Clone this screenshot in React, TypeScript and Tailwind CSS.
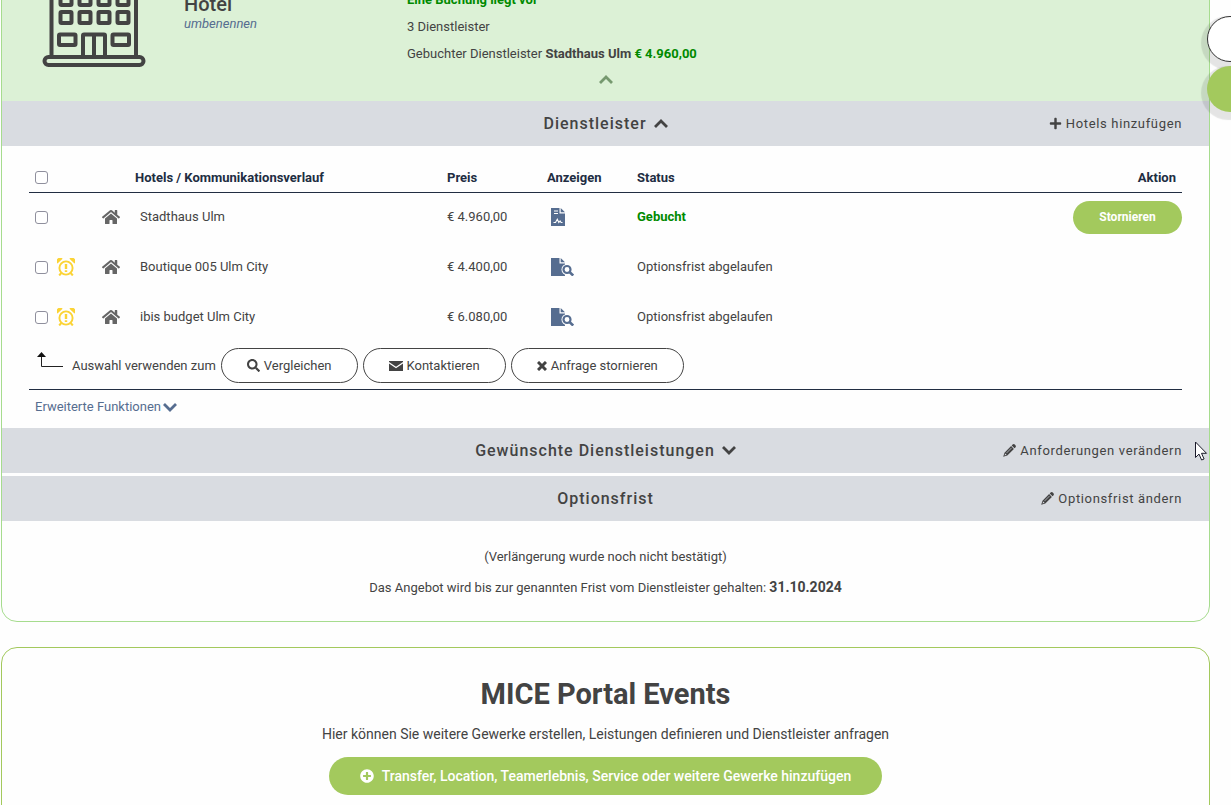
import type { ReactNode } from 'react'
import { FaHome, FaPlus, FaPlusCircle, FaSearch } from 'react-icons/fa'

const HOTELS = [
  { name: 'Stadthaus Ulm', price: '€ 4.960,00', status: 'Gebucht', booked: true },
  { name: 'Boutique 005 Ulm City', price: '€ 4.400,00', status: 'Optionsfrist abgelaufen', booked: false },
  { name: 'ibis budget Ulm City', price: '€ 6.080,00', status: 'Optionsfrist abgelaufen', booked: false },
]

function HotelIcon() {
  return (
    <svg width="104" height="100" viewBox="0 0 104 100" fill="none" stroke="#434343" strokeWidth="4">
      <path d="M9.5 90V2H94v88" />
      {[15, 33, 51].map(y =>
        [24, 43, 62, 81].map(x => (
          <rect key={`${x}-${y}`} x={x - 5.5} y={y - 6} width="11" height="11" rx="1" />
        )),
      )}
      <rect x="17" y="67.5" width="16.5" height="10.5" rx="1" />
      <rect x="70.5" y="67.5" width="16.5" height="10.5" rx="1" />
      <path d="M41 90V68.5a1 1 0 0 1 1-1h20a1 1 0 0 1 1 1V90M52 68v22" />
      <rect x="2.5" y="90" width="99" height="8" rx="4" />
    </svg>
  )
}

function Chevron({ up = false }: { up?: boolean }) {
  return (
    <svg width="14" height="9" viewBox="0 0 14 9" fill="none" stroke="currentColor" strokeWidth="2.8">
      <path d={up ? 'M1 8l6-6 6 6' : 'M1 1l6 6 6-6'} />
    </svg>
  )
}

function PencilIcon() {
  return (
    <svg width="13" height="13" viewBox="0 0 13 13" fill="#434343">
      <path d="M9.600.6a1.600 1.600 0 0 1 2.200 0l.6.6a1.600 1.600 0 0 1 0 2.200l-.9.9-2.800-2.800Z" />
      <path d="m8.100 2.100 2.800 2.800-6.600 6.600L.2 12.800l1.300-4.100ZM2.200 9.400l-.7 2.100 2.100-.7Z" />
      <path d="m8.200 3.700.6.6-5 5-.6-.6Z" fill="#9a9da2" />
    </svg>
  )
}

function CrossIcon() {
  return (
    <svg width="10" height="10" viewBox="0 0 10 10" stroke="#434343" strokeWidth="3">
      <path d="m1 1 8 8M9 1 1 9" />
    </svg>
  )
}

function AlarmIcon() {
  return (
    <svg width="18" height="18" viewBox="0 0 18 18" fill="none" stroke="#fbd335">
      <circle cx="9" cy="10" r="6.600" strokeWidth="1.900" />
      <path d="M.5 5.500A3.200 3.200 0 0 1 5.600.8ZM17.500 5.500a3.200 3.200 0 0 0-5.100-4.700Z" fill="#fbd335" stroke="none" />
      <path d="M4.300 15 2.200 17.500M13.700 15l2.100 2.500" strokeWidth="2" />
      <path d="M9 6v5M9 12.300v1.700" strokeWidth="2.400" />
    </svg>
  )
}

function ContractIcon() {
  return (
    <svg width="14" height="18" viewBox="0 0 14 18">
      <path d="M0 0h8.500v5.500H14V18H0ZM9.700 0 14 4.300H9.700Z" fill="#566d90" />
      <path d="M3 3h4M3 5.500h4M2.500 14.500h2l1.800-3.200 1.500 3.200 1.300-1.500 1 1.500h1.400" fill="none" stroke="#fff" strokeWidth="1.100" />
    </svg>
  )
}

function OfferIcon() {
  return (
    <svg width="23" height="18" viewBox="0 0 23 18">
      <path d="M0 0h8.500v5.500H14V18H0ZM9.700 0 14 4.300H9.700Z" fill="#566d90" />
      <circle cx="16" cy="11.500" r="5.500" fill="#fff" />
      <circle cx="16" cy="11.500" r="3.500" fill="#fff" stroke="#566d90" strokeWidth="2.200" />
      <path d="m18.500 14 3.700 3.500" stroke="#566d90" strokeWidth="2.600" />
    </svg>
  )
}

function MailIcon() {
  return (
    <svg width="14" height="10" viewBox="0 0 14 10" fill="#434343">
      <path d="M0 0h14v1L7 5.800 0 1ZM0 2.500l7 4.800 7-4.800V10H0Z" />
    </svg>
  )
}

function SelectionArrow() {
  return (
    <svg width="26" height="16" viewBox="0 0 26 16">
      <path d="M4.500 4v10.500H26" fill="none" stroke="#222" />
      <path d="M4.500 0 9 5H0Z" fill="#111" />
    </svg>
  )
}

function SectionBar({ title, children }: { title: ReactNode; children: ReactNode }) {
  return (
    <div className="grid h-[45px] grid-cols-[1fr_auto_1fr] items-center bg-[#d9dce1] px-[27px]">
      <h2 className="col-start-2 flex items-center gap-[7px] text-base font-medium tracking-[1px]">{title}</h2>
      <button type="button" className="flex items-center gap-1 justify-self-end text-[13px] tracking-wider">
        {children}
      </button>
    </div>
  )
}

function Checkbox({ label }: { label: string }) {
  return (
    <input
      type="checkbox"
      aria-label={label}
      className="h-[13px] w-[13px] shrink-0 appearance-none rounded-[3px] border border-[#8f8f9d] bg-white"
    />
  )
}

function OutlineButton({ children }: { children: ReactNode }) {
  return (
    <button
      type="button"
      className="flex h-[35px] items-center gap-1 rounded-full border border-[#434343] bg-white px-[25px]"
    >
      {children}
    </button>
  )
}

export default function App() {
  return (
    <div className="relative h-screen overflow-hidden bg-[#fefefe] font-[Roboto,sans-serif] text-[13px] leading-5 text-[#434343]">
      <main className="-mt-10 mr-[21px] ml-px">
        {/* Hotel */}
        <section className="overflow-hidden rounded-b-2xl border border-[#a6dc8e]">
          <div className="bg-[#dcf1d6] pb-[10px]">
            <div className="grid grid-cols-[142px_223px_1fr] pl-10">
              <div className="pt-[6px]">
                <HotelIcon />
              </div>
              <div className="pt-[31px]">
                <h1 className="text-xl leading-6 font-medium">Hotel</h1>
                <a href="#umbenennen" className="block leading-4 text-[#566d90] italic">umbenennen</a>
              </div>
              <div className="pt-[25px] leading-[27px]">
                <p className="font-bold text-[#008a00]">Eine Buchung liegt vor</p>
                <p>3 Dienstleister</p>
                <p>
                  Gebuchter Dienstleister <b>Stadthaus Ulm <span className="text-[#008a00]">€ 4.960,00</span></b>
                </p>
              </div>
            </div>
            <button type="button" aria-label="Einklappen" className="mx-auto flex h-6 items-center text-[#76996f]">
              <Chevron up />
            </button>
          </div>

          <SectionBar title={<>Dienstleister <Chevron up /></>}>
            <FaPlus size={13} /> Hotels hinzufügen
          </SectionBar>

          <div className="px-[27px] pt-[18px] pb-[11px]">
            <table className="w-full table-fixed text-left">
              <colgroup>
                <col className="w-[73px]" />
                <col className="w-[33px]" />
                <col className="w-[312px]" />
                <col className="w-[100px]" />
                <col className="w-[90px]" />
                <col />
                <col className="w-[120px]" />
              </colgroup>
              <thead>
                <tr className="h-7 border-b border-[#212d42] text-[#212d42]">
                  <th className="pl-[6px]"><div className="flex"><Checkbox label="Alle auswählen" /></div></th>
                  <th />
                  <th>Hotels / Kommunikationsverlauf</th>
                  <th>Preis</th>
                  <th>Anzeigen</th>
                  <th>Status</th>
                  <th className="pr-[6px] text-right">Aktion</th>
                </tr>
              </thead>
              <tbody>
                {HOTELS.map(h => (
                  <tr key={h.name} className="h-[50px]">
                    <td className="pl-[6px]">
                      <div className="flex items-center gap-[9px]">
                        <Checkbox label={h.name} />
                        {!h.booked && <AlarmIcon />}
                      </div>
                    </td>
                    <td><FaHome size={18} className="text-[#666]" /></td>
                    <td className="pl-[5px]">{h.name}</td>
                    <td>{h.price}</td>
                    <td className="pl-1">
                      <button type="button" aria-label="Anzeigen" className="flex">
                        {h.booked ? <ContractIcon /> : <OfferIcon />}
                      </button>
                    </td>
                    <td className={h.booked ? 'font-bold text-[#008a00]' : ''}>{h.status}</td>
                    <td>
                      {h.booked && (
                        <button
                          type="button"
                          className="ml-auto flex h-[33px] w-[109px] items-center justify-center rounded-full bg-[#a3c95d] text-xs font-bold text-white"
                        >
                          Stornieren
                        </button>
                      )}
                    </td>
                  </tr>
                ))}
              </tbody>
            </table>

            <div className="flex items-center gap-[5px] border-b border-[#212d42] pt-[6px] pb-[6px] pl-2">
              <div className="flex items-center gap-[9px]">
                <div className="pb-3"><SelectionArrow /></div>
                Auswahl verwenden zum
              </div>
              <OutlineButton><FaSearch size={13} /> Vergleichen</OutlineButton>
              <OutlineButton><MailIcon /> Kontaktieren</OutlineButton>
              <OutlineButton><CrossIcon /> Anfrage stornieren</OutlineButton>
            </div>
            <button type="button" className="mt-[7px] ml-[6px] flex items-center gap-[2px] text-[#566d90]">
              Erweiterte Funktionen <Chevron />
            </button>
          </div>

          <div className="grid gap-[3px]">
            <SectionBar title={<>Gewünschte Dienstleistungen <Chevron /></>}>
              <PencilIcon /> Anforderungen verändern
            </SectionBar>
            <SectionBar title="Optionsfrist">
              <PencilIcon /> Optionsfrist ändern
            </SectionBar>
          </div>

          <div className="grid gap-[10px] pt-[26px] pb-[23px] text-center">
            <p>(Verlängerung wurde noch nicht bestätigt)</p>
            <p>
              Das Angebot wird bis zur genannten Frist vom Dienstleister gehalten: <b className="text-sm">31.10.2024</b>
            </p>
          </div>
        </section>

        {/* Events */}
        <section className="mt-[25px] flex flex-col items-center rounded-t-2xl border border-[#a3c95d] pt-7 pb-8">
          <h2 className="text-[29px] leading-9 font-bold">MICE Portal Events</h2>
          <p className="mt-3 text-sm">
            Hier können Sie weitere Gewerke erstellen, Leistungen definieren und Dienstleister anfragen
          </p>
          <button
            type="button"
            className="mt-[13px] flex h-[38px] items-center gap-2 rounded-full bg-[#a3c95d] px-[31px] text-sm font-medium text-white"
          >
            <FaPlusCircle size={14} /> Transfer, Location, Teamerlebnis, Service oder weitere Gewerke hinzufügen
          </button>
        </section>
      </main>

      {/* floating buttons, half off the right edge */}
      <div className="absolute top-4 -right-[22px] grid gap-1">
        <button
          type="button"
          aria-label="Merkliste"
          className="h-[46px] w-[46px] rounded-full border border-[#333] bg-white shadow-[-2px_4px_1px_4px_rgba(0,0,0,0.1)]"
        />
        <button
          type="button"
          aria-label="Hilfe"
          className="h-[46px] w-[46px] rounded-full bg-[#a3c95d] shadow-[-2px_4px_1px_4px_rgba(0,0,0,0.1)]"
        />
      </div>

      <svg className="absolute top-[441px] left-[1195px]" width="13" height="20" viewBox="0 0 13 20">
        <path d="M.5 1v15.500l3.500-3.400 2.600 5.900 2.500-1-2.600-5.700h5Z" fill="#fff" stroke="#1b1b2b" />
      </svg>
    </div>
  )
}
